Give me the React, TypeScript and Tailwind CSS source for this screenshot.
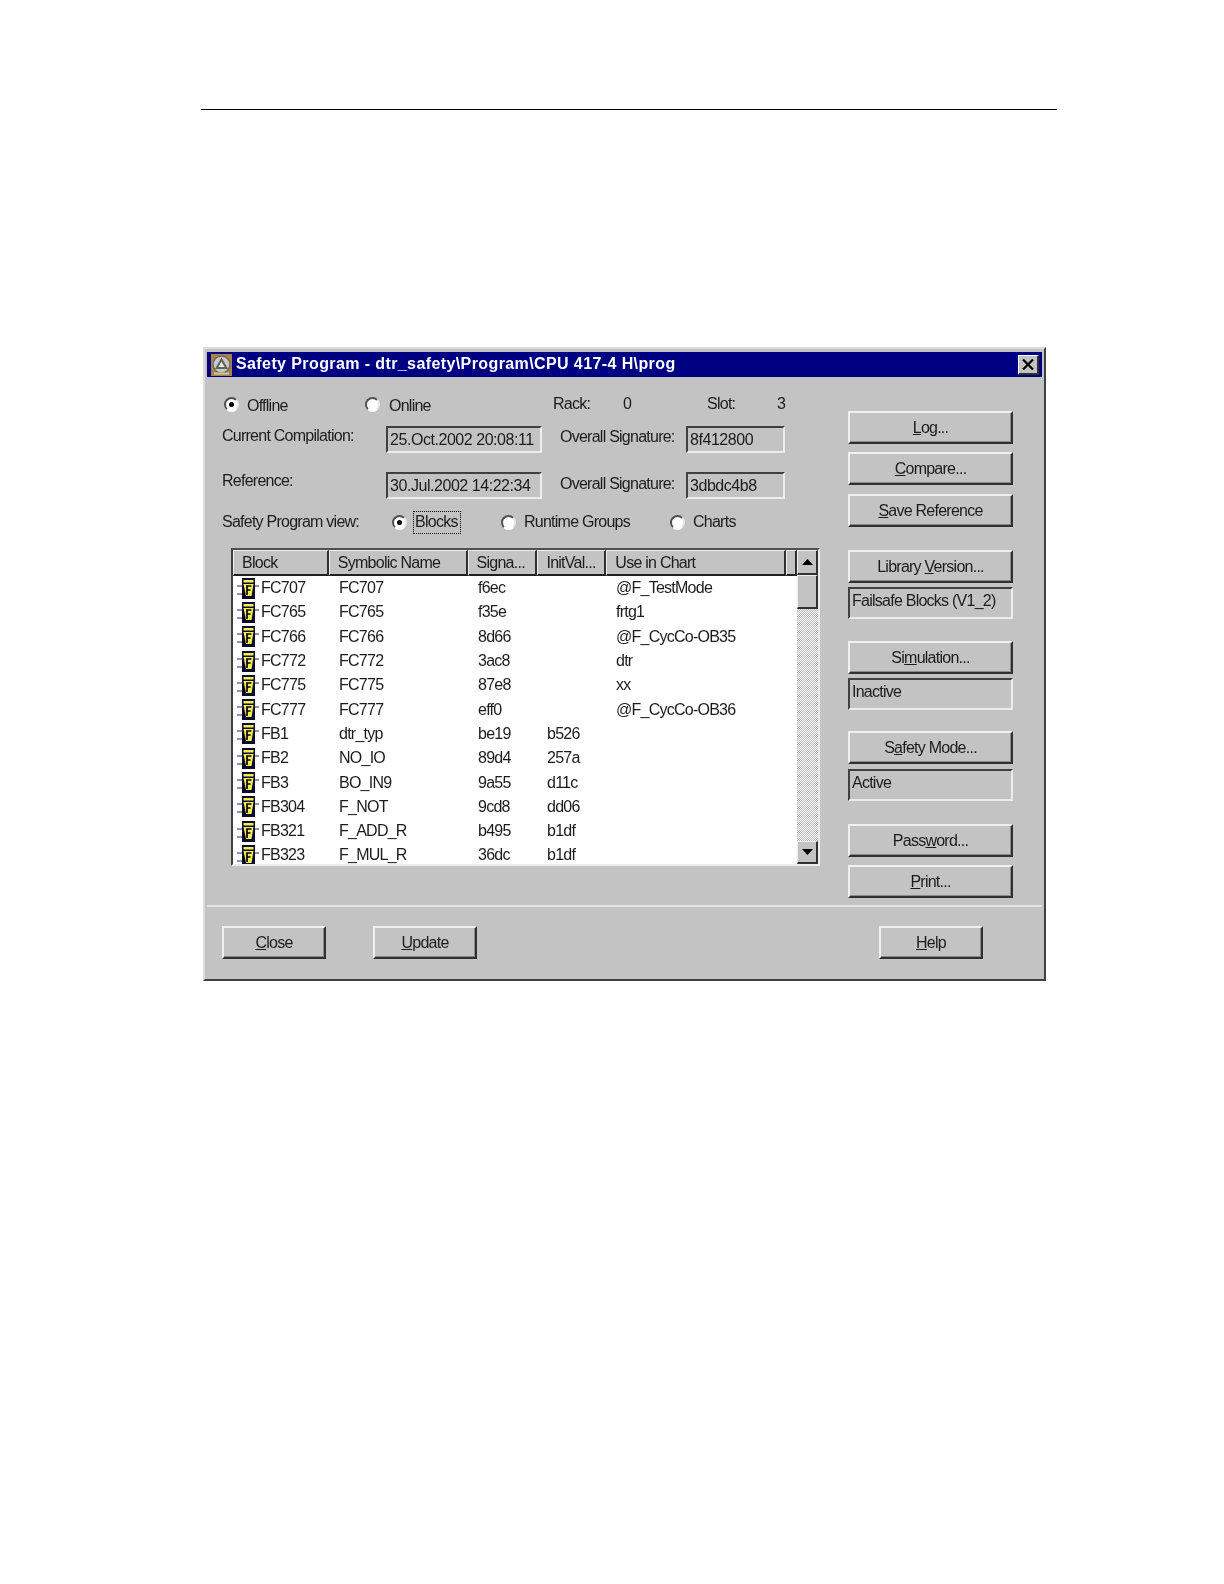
import React from "react";

const rows: [string, string, string, string, string][] = [
  ["FC707", "FC707", "f6ec", "", "@F_TestMode"],
  ["FC765", "FC765", "f35e", "", "frtg1"],
  ["FC766", "FC766", "8d66", "", "@F_CycCo-OB35"],
  ["FC772", "FC772", "3ac8", "", "dtr"],
  ["FC775", "FC775", "87e8", "", "xx"],
  ["FC777", "FC777", "eff0", "", "@F_CycCo-OB36"],
  ["FB1", "dtr_typ", "be19", "b526", ""],
  ["FB2", "NO_IO", "89d4", "257a", ""],
  ["FB3", "BO_IN9", "9a55", "d11c", ""],
  ["FB304", "F_NOT", "9cd8", "dd06", ""],
  ["FB321", "F_ADD_R", "b495", "b1df", ""],
  ["FB323", "F_MUL_R", "36dc", "b1df", ""],
];

function Radio({ on }: { on?: boolean }) {
  return (
    <span className="flex h-[15px] w-[15px] shrink-0 items-center justify-center rounded-full border-2 border-t-[#505050] border-l-[#505050] border-r-[#e8e8e8] border-b-white bg-white">
      {on && <span className="h-[5px] w-[5px] rounded-full bg-black" />}
    </span>
  );
}

function Btn({ children, w = "w-[165px]", extra = "" }: { children: React.ReactNode; w?: string; extra?: string }) {
  return (
    <div
      className={`flex h-[33px] ${w} items-center justify-center border-t-2 border-l-2 border-t-[#f0f0f0] border-l-[#f0f0f0] border-r-2 border-b-2 border-r-[#303030] border-b-[#303030] bg-[#c3c3c3] shadow-[inset_-1px_-1px_0_#8a8a8a] ${extra}`}
    >
      {children}
    </div>
  );
}

function Field({ children, w, h = "h-[27px]", pt = "pt-[1px]", extra = "" }: { children?: React.ReactNode; w: string; h?: string; pt?: string; extra?: string }) {
  return (
    <div className={`${w} ${h} ${pt} border-t-2 border-l-2 border-t-[#404040] border-l-[#404040] border-r-2 border-b-2 border-r-[#ececec] border-b-[#ececec] pl-[2px] leading-[21px] whitespace-nowrap ${extra}`}>
      {children}
    </div>
  );
}

function BlockIcon() {
  return (
    <svg width="22" height="21" viewBox="0 0 22 21" className="shrink-0">
      <path d="M0 8H5M0 16H5M18 8H22" stroke="#20209a" strokeWidth="1.2" fill="none" />
      <rect x="5" y="0" width="13" height="21" fill="#0a0a30" />
      <rect x="6.5" y="2" width="10" height="2.5" fill="#f4ee50" />
      <path d="M6.5 6H16.5L14.5 18H9Z" fill="#f4ee50" />
      <path d="M5.5 12L9 19H5.5Z" fill="#000" />
      <path d="M10 17V8H14.5M10 12H13.5" stroke="#000" strokeWidth="1.7" fill="none" />
    </svg>
  );
}

function HeaderCell({ w, children }: { w: string; children?: React.ReactNode }) {
  return (
    <div className={`${w} flex h-full items-center border-t border-l border-t-[#eeeeee] border-l-[#eeeeee] border-r-2 border-b-2 border-r-[#303030] border-b-[#202020] pl-[8px] whitespace-nowrap`}>
      {children}
    </div>
  );
}

function ScrollBtn({ up }: { up?: boolean }) {
  return (
    <div className={`flex ${up ? "h-[25px]" : "h-[23px]"} w-[21px] shrink-0 items-center justify-center border-t border-l border-t-[#eeeeee] border-l-[#eeeeee] border-r-2 border-b-2 border-r-[#303030] border-b-[#303030] bg-[#c3c3c3]`}>
      <svg width="11" height="6" viewBox="0 0 11 6">
        <path d={up ? "M5.5 0L11 6H0Z" : "M0 0H11L5.5 6Z"} fill="#000" />
      </svg>
    </div>
  );
}

export default function App() {
  return (
    <div className="min-h-[1584px] w-[1224px] bg-white pt-[109px] font-['Liberation_Sans',Arial,sans-serif] text-[16px] tracking-[-0.75px] text-[#1c1c1c]">
      <div className="ml-[201px] h-[1px] w-[856px] bg-black" />
      <div className="mt-[237px] ml-[203px] flex h-[634px] w-[843px] flex-col border-t-2 border-l-2 border-t-[#dcdcdc] border-l-[#dcdcdc] border-r-2 border-b-2 border-r-[#404040] border-b-[#404040] bg-[#c3c3c3] px-[2px] pt-[3px] blur-[0.35px]">
        {/* title bar */}
        <div className="flex h-[25px] shrink-0 items-center bg-[#000082] pr-[3px] pl-[4px]">
          <svg width="21" height="22" viewBox="0 0 21 22" className="shrink-0">
            <rect width="21" height="22" fill="#a8824a" />
            <circle cx="10.5" cy="10.5" r="8.5" fill="#c8c8c8" stroke="#706a60" strokeWidth="1.5" />
            <path d="M10.5 3.5L17 15H4Z" fill="#60605c" />
            <path d="M10.5 7.5L13.6 13H7.4Z" fill="#e8e8e8" />
            <rect x="3" y="18.5" width="15" height="2" fill="#d8c8a0" />
          </svg>
          <span className="ml-[4px] pb-[1px] text-[16px] font-bold tracking-[0.4px] whitespace-nowrap text-white">
            Safety Program - dtr_safety\Program\CPU 417-4 H\prog
          </span>
          <div className="ml-auto flex h-[20px] w-[21px] items-center justify-center border-t border-l border-t-white border-l-white border-r-2 border-b-2 border-r-[#303030] border-b-[#303030] bg-[#c3c3c3]">
            <svg width="12" height="11" viewBox="0 0 12 11">
              <path d="M1 0.5L11 10.5M11 0.5L1 10.5" stroke="#000" strokeWidth="2.2" />
            </svg>
          </div>
        </div>

        <div className="flex h-[530px] shrink-0 border-b-2 border-b-[#e4e4e4]">
          {/* left column */}
          <div className="w-[641px] shrink-0 pl-[15px]">
            <div className="mt-[17px] flex h-[20px] items-center">
              <div className="ml-[2px] flex w-[141px] items-center gap-[8px]">
                <Radio on />
                <span className="mt-[4px]">Offline</span>
              </div>
              <div className="flex w-[188px] items-center gap-[9px]">
                <Radio />
                <span className="mt-[4px]">Online</span>
              </div>
              <span className="w-[70px]">Rack:</span>
              <span className="w-[84px]">0</span>
              <span className="w-[70px]">Slot:</span>
              <span>3</span>
            </div>

            <div className="mt-[12px] flex h-[27px] items-start">
              <span className="mt-[-2px] w-[164px] whitespace-nowrap">Current Compilation:</span>
              <Field w="w-[156px]" extra="tracking-[-0.45px]">25.Oct.2002 20:08:11</Field>
              <span className="mt-[-1px] ml-[18px] w-[126px] whitespace-nowrap">Overall Signature:</span>
              <Field w="w-[99px]" extra="tracking-[-0.45px]">8f412800</Field>
            </div>

            <div className="mt-[19px] flex h-[27px] items-start">
              <span className="mt-[-3px] w-[164px] whitespace-nowrap">Reference:</span>
              <Field w="w-[156px]" extra="tracking-[-0.45px]">30.Jul.2002 14:22:34</Field>
              <span className="ml-[18px] w-[126px] whitespace-nowrap">Overall Signature:</span>
              <Field w="w-[99px]" extra="tracking-[-0.45px]">3dbdc4b8</Field>
            </div>

            <div className="mt-[11px] flex h-[24px] items-center">
              <span className="w-[170px] whitespace-nowrap">Safety Program view:</span>
              <Radio on />
              <span className="ml-[6px] flex h-[23px] w-[48px] items-center border border-dotted border-black pl-[1px]">Blocks</span>
              <div className="ml-[40px] flex w-[169px] items-center gap-[8px]">
                <Radio />
                <span>Runtime Groups</span>
              </div>
              <div className="flex items-center gap-[8px]">
                <Radio />
                <span>Charts</span>
              </div>
            </div>

            {/* list */}
            <div className="mt-[14px] ml-[9px] flex h-[318px] w-[589px] border-t-2 border-l-2 border-t-[#505050] border-l-[#404040] border-r-2 border-b-2 border-r-[#ececec] border-b-[#ececec]">
              <div className="flex w-[564px] shrink-0 flex-col overflow-hidden">
                <div className="flex h-[26px] shrink-0 bg-[#c3c3c3]">
                  <HeaderCell w="w-[96px]">Block</HeaderCell>
                  <HeaderCell w="w-[139px]">Symbolic Name</HeaderCell>
                  <HeaderCell w="w-[70px]">Signa...</HeaderCell>
                  <HeaderCell w="w-[69px]">InitVal...</HeaderCell>
                  <HeaderCell w="w-[180px]">Use in Chart</HeaderCell>
                  <HeaderCell w="w-[10px]" />
                </div>
                <div className="flex-1 bg-white">
                  {rows.map((r) => (
                    <div key={r[0]} className="flex h-[24.3px] items-center whitespace-nowrap">
                      <div className="flex w-[106px] shrink-0 items-center pl-[4px]">
                        <BlockIcon />
                        <span className="ml-[2px]">{r[0]}</span>
                      </div>
                      <span className="w-[139px] shrink-0">{r[1]}</span>
                      <span className="w-[69px] shrink-0">{r[2]}</span>
                      <span className="w-[69px] shrink-0">{r[3]}</span>
                      <span>{r[4]}</span>
                    </div>
                  ))}
                </div>
              </div>
              <div className="flex w-[21px] shrink-0 flex-col bg-[repeating-conic-gradient(#ffffff_0_25%,#b8b8b8_0_50%)] bg-[length:2px_2px]">
                <ScrollBtn up />
                <div className="h-[34px] w-[21px] shrink-0 border-t border-l border-t-[#eeeeee] border-l-[#eeeeee] border-r-2 border-b-2 border-r-[#303030] border-b-[#303030] bg-[#c3c3c3]" />
                <div className="flex-1" />
                <ScrollBtn />
              </div>
            </div>
          </div>

          {/* right column */}
          <div className="flex flex-col pt-[34px]">
            <Btn><span><u>L</u>og...</span></Btn>
            <Btn extra="mt-[8px]"><span><u>C</u>ompare...</span></Btn>
            <Btn extra="mt-[9px]"><span><u>S</u>ave Reference</span></Btn>
            <Btn extra="mt-[23px]"><span>Library <u>V</u>ersion...</span></Btn>
            <div className="mt-[4px]"><Field w="w-[165px]" h="h-[32px]">Failsafe Blocks (V1_2)</Field></div>
            <Btn extra="mt-[22px]"><span>Si<u>m</u>ulation...</span></Btn>
            <div className="mt-[4px]"><Field w="w-[165px]" h="h-[32px]">Inactive</Field></div>
            <Btn extra="mt-[21px]"><span>S<u>a</u>fety Mode...</span></Btn>
            <div className="mt-[5px]"><Field w="w-[165px]" h="h-[32px]">Active</Field></div>
            <Btn extra="mt-[23px]"><span>Pass<u>w</u>ord...</span></Btn>
            <Btn extra="mt-[8px]"><span><u>P</u>rint...</span></Btn>
          </div>
        </div>

        {/* footer */}
        <div className="flex pt-[19px] pl-[15px]">
          <Btn w="w-[104px]" extra="shadow-[0_0_0_1px_#101010,inset_-1px_-1px_0_#8a8a8a]"><span><u>C</u>lose</span></Btn>
          <Btn w="w-[104px]" extra="ml-[47px]"><span><u>U</u>pdate</span></Btn>
          <Btn w="w-[104px]" extra="ml-[402px]"><span><u>H</u>elp</span></Btn>
        </div>
      </div>
    </div>
  );
}
